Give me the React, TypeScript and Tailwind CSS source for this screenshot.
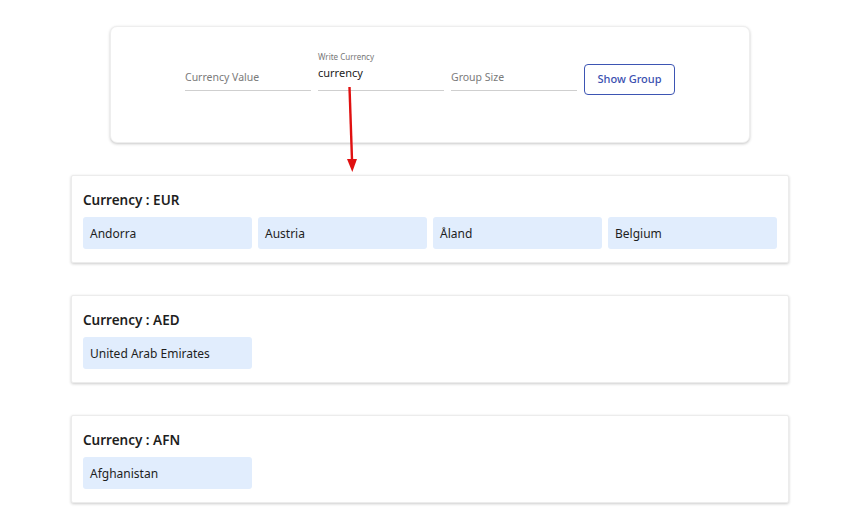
const groups = [
  { code: "EUR", countries: ["Andorra", "Austria", "Åland", "Belgium"] },
  { code: "AED", countries: ["United Arab Emirates"] },
  { code: "AFN", countries: ["Afghanistan"] },
];

const Field: React.FC<{ label?: string; value?: string; placeholder: string }> = ({ label, value, placeholder }) => {
  return (
    <div className="w-[126px] flex flex-col">
      <div className="h-[12px] text-[8px] leading-[12px] text-[#777]">{label}</div>
      <div className="h-[28px] border-b border-[#cfcfcf] flex items-center">
        {value ? (
          <span className="text-[11px] text-[#222] -mt-[6px]">{value}</span>
        ) : (
          <span className="text-[10.5px] text-[#7a7a7a] mt-[2px]">{placeholder}</span>
        )}
      </div>
    </div>
  );
};

export default function App() {
  return (
    <div className="relative w-[842px] h-[519px] bg-white overflow-hidden font-['Noto_Sans',sans-serif]">
      <div className="pt-[26px] flex flex-col gap-[32px]">
        <div className="ml-[110px] w-[640px] h-[117px] rounded-[7px] bg-white border border-[#eeeeee] shadow-[0_1px_3px_rgba(0,0,0,0.22)] flex justify-center items-start gap-[7px] pt-[24px]">
          <Field placeholder="Currency Value" />
          <Field label="Write Currency" value="currency" placeholder="Write Currency" />
          <Field placeholder="Group Size" />
          <button className="mt-[13px] w-[91px] h-[31px] rounded-[4px] border border-[#3d55b3] text-[11px] font-medium text-[#3b50b0] bg-white">
            Show Group
          </button>
        </div>

        {groups.map((g) => (
          <div
            key={g.code}
            className="ml-[71px] w-[718px] h-[88px] bg-white rounded-[2px] border border-[#ececec] shadow-[0_1px_3px_rgba(0,0,0,0.2)] pt-[14px] px-[11px]"
          >
            <div className="h-[20px] leading-[20px] text-[13.5px] font-semibold text-[#1e1e1e]">
              Currency : {g.code}
            </div>
            <div className="mt-[7px] grid grid-cols-4 gap-[6px]">
              {g.countries.map((c) => (
                <div key={c} className="h-[32px] rounded-[3px] bg-[#e1edfd] px-[7px] pt-[2px] flex items-center text-[12px] text-[#1e1e1e]">
                  {c}
                </div>
              ))}
            </div>
          </div>
        ))}
      </div>

      <svg className="absolute left-[340px] top-[84px]" width="24" height="92" viewBox="0 0 24 92">
        <line x1="9.5" y1="3" x2="12" y2="76" stroke="#e01010" strokeWidth="2.4" />
        <polygon points="7,75 17,75 12.3,88" fill="#e01010" />
      </svg>
    </div>
  );
}
